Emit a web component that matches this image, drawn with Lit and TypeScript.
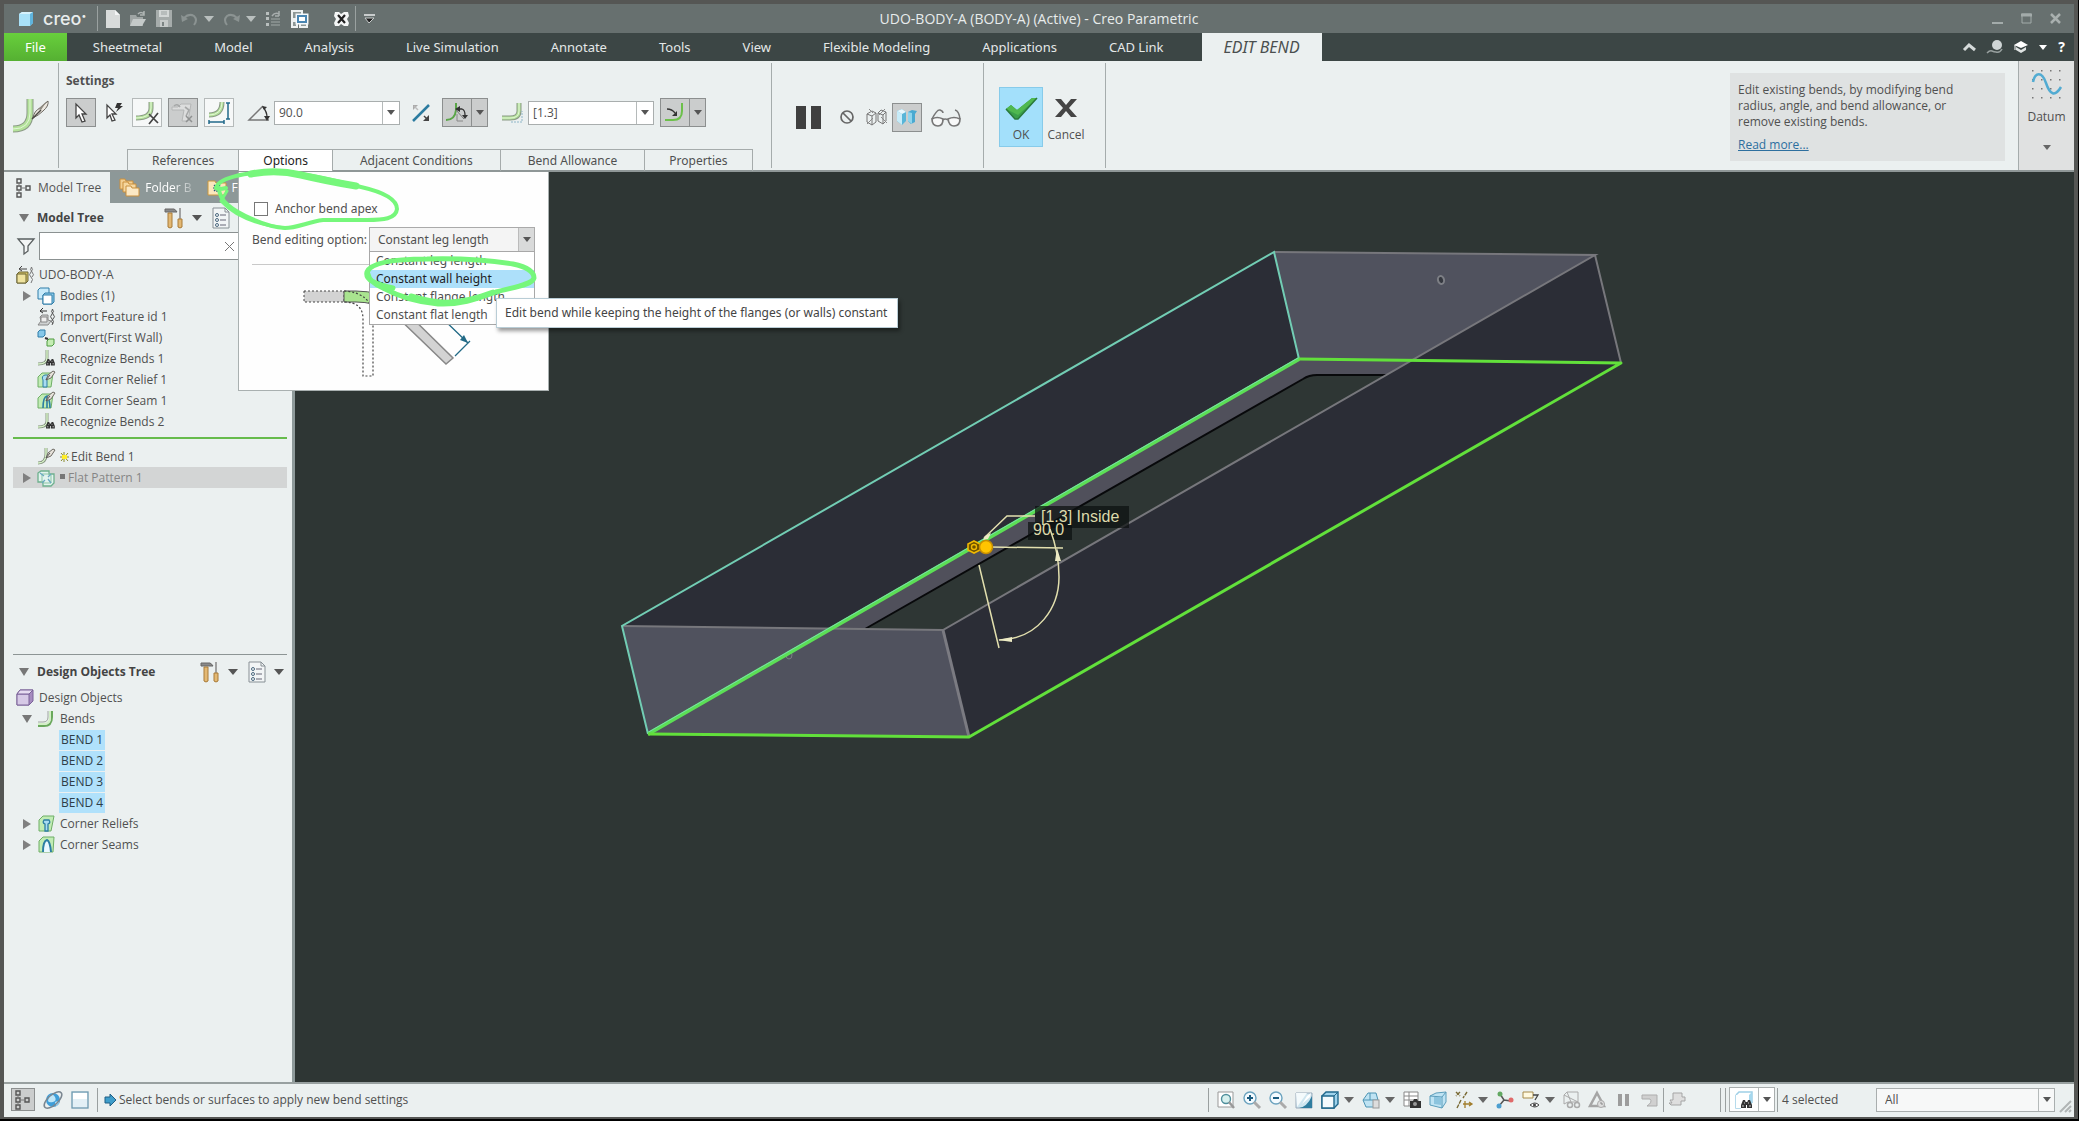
import { LitElement, html, css, svg, nothing } from "lit";
import { customElement } from "lit/decorators.js";
import { classMap } from "lit/directives/class-map.js";

const icon = (w: number, h: number, body: unknown) =>
  html`<svg class="ic" width=${w} height=${h} viewBox="0 0 ${w} ${h}" fill="none" aria-hidden="true">${body}</svg>`;

const caret = (fill = "#555") => icon(10, 6, svg`<path d="M0 0h10L5 6z" fill=${fill} />`);

const bend = (d: string, w = 4) => svg`
  <path d=${d} stroke="#8b9a86" stroke-width=${w + 2} />
  <path d=${d} stroke="#b4e29b" stroke-width=${w} />
  <path d=${d} stroke="#e2f6d6" stroke-width="1" />`;

const binoc = (x: number, y: number) => svg`
  <g transform="translate(${x} ${y})" fill="#333">
    <path d="M2 0h2l1 3v5H0V5zM7 0h2l2 5v3H6V3z" /><rect x="4" y="2" width="3" height="3" />
    <path d="M1 6h2M8 6h2M3 3h1M7 3h1" stroke="#ccc" />
  </g>`;

const pen = (x: number, y: number) => svg`
  <g transform="translate(${x} ${y})">
    <path d="M0 9l2-5 5-4 2 1-4 6z" fill="#e8e4dc" stroke="#6d6a63" stroke-width="1" />
    <path d="M0 9l4-5" stroke="#555" />
  </g>`;

const I = {
  logo: icon(16, 16, svg`
    <path d="M1 3l3-2h11v11l-3 3H1z" fill="#8fd6f4" /><path d="M1 3l3-2h11l-3 2z" fill="#d6f1fc" />
    <path d="M12 3l3-2v11l-3 3z" fill="#5fb4dd" /><path d="M1 3h11v12H1z" fill="#a9e1f8" />`),
  newDoc: icon(14, 18, svg`<path d="M0 0h9l5 5v13H0z" fill="#d8dbda" /><path d="M9 0l5 5H9z" fill="#f4f5f5" />`),
  open: icon(18, 16, svg`
    <path d="M1 4h6l1 2h6v9H1z" fill="#9fa5a4" /><path d="M4 8h13l-4 7H1z" fill="#c4c9c8" />
    <path d="M9 3q3-3 6 0M15 0v4h-4" stroke="#aeb4b3" stroke-width="1.5" />`),
  save: icon(16, 17, svg`
    <path d="M0 0h16v17H0z" fill="#a6acab" /><path d="M3 0h10v7H3z" fill="#d3d7d6" />
    <path d="M4 10h8v7H4z" fill="#c6cac9" /><path d="M6 12h2v4H6z" fill="#7c8483" />
    <path d="M5 2h6M5 4h6" stroke="#9ba2a1" />`),
  undo: icon(17, 14, svg`<path d="M3 6q5-5 10-2 4 4 0 9" stroke="#8b9392" stroke-width="2" /><path d="M0 3l1 7 6-3z" fill="#8b9392" />`),
  redo: icon(17, 14, svg`<path d="M14 6Q9 1 4 4 0 8 4 13" stroke="#8b9392" stroke-width="2" /><path d="M17 3l-1 7-6-3z" fill="#8b9392" />`),
  regen: icon(17, 16, svg`
    <path d="M1 1h3v3H1zM1 6h3v3H1zM1 12h3v3H1z" fill="#b9bfbe" />
    <path d="M6 8h9M6 11h9M6 14h9" stroke="#a2a9a8" /><path d="M7 5q3-4 7-2M14 0v5M10 5h4" stroke="#a8aeae" stroke-width="1.5" />`),
  windows: icon(18, 18, svg`
    <path d="M1 1h10v8H1zM1 11h5v6H1zM9 12h7v5H9z" fill="#8d9796" stroke="#eef1f1" stroke-width="2" />
    <rect x="5" y="4" width="12" height="10" fill="#fff" stroke="#eef4f8" /><path d="M7 6h8v6H7z" fill="#fff" stroke="#4a86b2" stroke-width="2" />`),
  closeWin: icon(15, 14, svg`
    <path d="M1 0h4l2 2 3-2h4l1 4-2 3 2 4-1 3h-4l-3-2-2 2H1l-1-3 2-4-2-3z" fill="#f4f6f6" />
    <path d="M4 3l7 8M11 3l-7 8" stroke="#222" stroke-width="2.2" />`),
  customize: icon(11, 9, svg`<path d="M0 1h11" stroke="#e8ebeb" stroke-width="1.5" /><path d="M1 4h9L5 9z" fill="#222" stroke="#c8cccc" stroke-width="1" />`),
  min: icon(11, 12, svg`<path d="M0 10h11" stroke="#a3abaa" stroke-width="2" />`),
  max: icon(11, 12, svg`<path d="M1 1h9v9H1z" stroke="#a3abaa" /><path d="M0 2h11" stroke="#a3abaa" stroke-width="3" />`),
  x: icon(11, 12, svg`<path d="M1 1l9 9M10 1l-9 9" stroke="#a9b0af" stroke-width="2.5" />`),
  up: icon(13, 8, svg`<path d="M1 7l5-5 6 5" stroke="#d5dada" stroke-width="3" />`),
  search: icon(16, 14, svg`<circle cx="10" cy="5" r="5" fill="#cfd5d5" /><path d="M0 13q3-3 5-2t4 1q4 1 6-3" stroke="#98a09f" stroke-width="1.5" />`),
  cap: icon(14, 12, svg`<path d="M0 4l7-4 7 4-7 3z" fill="#fff" /><path d="M2 6l5 3 5-3v3l-5 3-5-3z" fill="#dfe3e3" /><path d="M1 4v5" stroke="#fff" />`),
  editBend: icon(36, 36, svg`
    ${bend("M17 1v14q0 16-17 16", 5)}
    <path d="M20 20q1-7 7-10l8-7q1 5-5 10-4 4-10 7z" fill="#ebe7df" stroke="#6b6760" /><path d="M19 21l9-9" stroke="#4d4a45" stroke-width="1.5" /><path d="M25 11l9-8-6 9z" fill="#8f8a80" />`),
  pick: icon(14, 20, svg`<path d="M2 1v14l3-3 3 7 3-1-3-7h4z" fill="#fff" stroke="#444" stroke-width="1.3" />`),
  pickFast: icon(18, 19, svg`<path d="M2 2v13l3-3 2 6 3-1-3-6h4z" fill="#fff" stroke="#444" stroke-width="1.3" /><path d="M12 0h5l-2 3h3l-7 6 2-4h-3z" fill="#333" />`),
  bendX: icon(26, 24, svg`${bend("M17 1v6q0 10-15 10", 3)}<path d="M15 13l9 9M24 12l-9 11" stroke="#454545" stroke-width="1.7" />`),
  bendOff: icon(26, 24, svg`
    <path d="M2 6h6l3-3h10l-3 17h-6l2-11H2z" fill="#dcdddd" stroke="#b4b6b6" /><path d="M4 5q3-3 6 1M15 6l4 3-3 6" stroke="#a6a8a8" stroke-width="1.6" />
    <path d="M16 15l6 6M22 15l-6 6" stroke="#8f9191" stroke-width="1.5" />`),
  bendDim: icon(26, 24, svg`${bend("M16 1q0 13-13 13", 3)}<path d="M22 2v16M20 2h4M20 18h4M3 21h15M3 19v4M18 19v4" stroke="#226a8a" stroke-width="1.5" />`),
  angle: icon(22, 20, svg`<path d="M15 3L1 17h20" stroke="#777" stroke-width="1.5" /><path d="M15 4q4 5 4 10" stroke="#333" stroke-width="1.3" /><path d="M14 3l5 1-3 3zM16 13h6l-3 5z" fill="#333" />`),
  flip: icon(18, 18, svg`<path d="M1 17L17 1" stroke="#2b7ba0" stroke-width="2.5" /><path d="M1 1h5L1 6z" fill="#aaa" /><path d="M2 2l4 4" stroke="#bbb" stroke-width="1.5" /><path d="M17 17h-6l6-6z" fill="#444" /><path d="M12 12l4 4" stroke="#444" stroke-width="1.5" />`),
  radSide: icon(22, 20, svg`
    <path d="M10 0v7q-1 10-10 10" stroke="#5aa548" stroke-width="2" /><path d="M10 7l8 9" stroke="#777" />
    <path d="M13 6h3q3 1 3 6" stroke="#333" stroke-width="1.3" /><path d="M14 3v6l-5-3zM16 12h6l-3 4z" fill="#333" /><path d="M11 11v7h6" stroke="#888" />`),
  radius: icon(22, 20, svg`${bend("M17 0v8q0 7-9 7H0", 3)}<path d="M9 19h11V8" stroke="#8fb6c8" stroke-dasharray="2 1" />`),
  radIn: icon(20, 20, svg`<path d="M17 0v8q0 9-9 9H0" stroke="#6cc04a" stroke-width="2" /><path d="M2 6q5 0 8 4" stroke="#333" stroke-width="1.3" /><path d="M12 8v5H7z" fill="#333" />`),
  pause: icon(26, 23, svg`<path d="M0 0h10v23H0zM15 0h10v23H15z" fill="#3f3f3f" />`),
  none: icon(14, 14, svg`<circle cx="7" cy="7" r="6" stroke="#666" stroke-width="1.7" /><path d="M3 3l8 8" stroke="#666" stroke-width="1.7" />`),
  wire: icon(22, 18, svg`
    <path d="M1 6l5-3 4 2v9l-4 3-5-3zM1 6l5 2 4-3M6 8v9M12 5l3-3 5 2-3 3v9l3-3V4M12 5l5 2M12 5v8l5 3" stroke="#777" />
    <path d="M3 1l4 4M19 1l-6 6M1 16l6-6M21 15l-6-6" stroke="#8a8a8a" />`),
  verify: icon(22, 18, svg`
    <path d="M1 3l5-2 4 3v9l-4 4-5-4z" fill="#58b5d8" /><path d="M1 3l5 3v11l-5-4z" fill="#c7ecf9" /><path d="M1 3l5-2 4 3-4 2z" fill="#e7f7fd" />
    <path d="M12 4l4-2 5 1-2 3v8l-4 2-3-3z" fill="#49a9d1" /><path d="M12 4l4 1v11l-4-3z" fill="#8fd4ec" />`),
  glasses: icon(30, 20, svg`
    <path d="M1 12q5-3 11 0 0 7-5 7-6 0-6-7zM17 12q6-3 12 0 0 7-6 7-5 0-6-7z" fill="#f8f9f9" stroke="#777" stroke-width="1.7" />
    <path d="M12 13q2-2 5 0M1 12Q6 2 9 3t3 3M29 12q-1-8-5-9" stroke="#777" stroke-width="1.5" />`),
  ok: icon(32, 24, svg`<path d="M1 13l5-4 6 5L27 2h5L13 23h-3z" fill="#3aa04a" /><path d="M1 13l5-4 6 5L27 2h5L13 19z" fill="#4fb84f" /><path d="M1 13l9 10h3L32 2" stroke="#2a7a3b" stroke-width="1.5" />`),
  cancel: icon(22, 18, svg`<path d="M0 0h6l5 6 5-6h6l-8 9 8 9h-6l-5-6-5 6H0l8-9z" fill="#454545" />`),
  datum: icon(30, 28, svg`
    ${[1, 10, 19, 28].map((y) => [1, 10, 19, 28].map((x) => svg`<rect x=${x - 1} y=${y - 1} width="1.5" height="1.5" fill="#777" />`))}
    <path d="M1 12C3 2 10 1 14 13s9 14 15 4" stroke="#52abd2" stroke-width="2.5" />`),
  tree: icon(16, 20, svg`<path d="M1 1h4v4H1zM1 8h4v4H1zM1 15h4v4H1zM10 8h4v4h-4z" stroke="#555" stroke-width="1.4" /><path d="M3 5v3M3 12v3M6 10h3" stroke="#777" />`),
  folders: icon(21, 19, svg`
    <path d="M1 1h5l1 2h7v8H1z" fill="#f3cf92" stroke="#c98f3c" /><path d="M4 4h5l1 2h7v8H4z" fill="#f6d79f" stroke="#c98f3c" />
    <path d="M7 8h5l1 2h7v8H7z" fill="#fbe8c4" stroke="#c98f3c" />`),
  favs: icon(18, 17, svg`<path d="M0 2h7l1 2h10v12H0z" fill="#fbe6bd" stroke="#c9973f" /><path d="M9 5v8M5 9h8M6 6l6 6M12 6l-6 6" stroke="#1f4f7a" stroke-width="1.2" />`),
  hammer: icon(20, 22, svg`
    <path d="M1 2h9q2 1 3 3H1z" fill="#8a8a8a" stroke="#666" /><path d="M4 6h4v14q-2 2-4 0z" fill="#e3b873" stroke="#a87a38" />
    <path d="M16 1v11" stroke="#888" stroke-width="1.5" /><path d="M14 12h4v8q-2 2-4 0z" fill="#e3b873" stroke="#a87a38" />`),
  list: icon(18, 22, svg`
    <path d="M1 1h12l4 4v16H1z" fill="#f2f5f6" stroke="#889095" /><path d="M13 1v4h4" stroke="#889095" />
    <circle cx="5" cy="8" r="1.5" stroke="#4c6a80" /><circle cx="5" cy="13" r="1.5" stroke="#4c6a80" /><circle cx="5" cy="18" r="1.5" stroke="#4c6a80" />
    <path d="M8 8h6M8 13h6M8 18h6" stroke="#667" />`),
  funnel: icon(18, 18, svg`<path d="M1 2h16l-6 7v5l-4 3V9z" fill="#f3f5f5" stroke="#5a5f60" stroke-width="1.3" />`),
  part: icon(18, 18, svg`
    <path d="M1 8l2-2h9v9l-2 2H1z" fill="#d6c468" stroke="#6b6434" /><path d="M1 8h9v9H1z" fill="#efe39f" stroke="#6b6434" />
    <path d="M4 3h7M3 3l3-3M3 3l3 2" stroke="#444" /><path d="M15 1q3 2 0 5t0 5 0 6M16 1q-3 2 0 5t0 5" stroke="#777" />`),
  bodies: icon(18, 18, svg`<path d="M1 3l2-2h9v9l-2 2H1z" fill="#c7eafa" stroke="#2f7da8" /><path d="M6 8l2-2h9v9l-2 2H6z" fill="#8fcdea" stroke="#2f7da8" /><path d="M6 8h9v9H6z" fill="#fff" stroke="#2f7da8" />`),
  importF: icon(18, 18, svg`
    <path d="M3 9l2-2h6v5l3 1-3 4H1l3-4z" fill="#cfd2d2" stroke="#888" /><path d="M4 9h6v5H4z" fill="#eee" stroke="#888" />
    <path d="M3 3h7M3 3l3-3M3 3l3 2" stroke="#333" /><path d="M15 1q3 2 0 5t0 5 0 6M16 1q-3 2 0 5t0 5 0 5" stroke="#555" />`),
  convert: icon(18, 18, svg`
    <path d="M1 3l2-2h5v5L6 8H1z" fill="#86c8ea" stroke="#2f7da8" /><path d="M8 9l3 1" stroke="#333" stroke-width="2" />
    <path d="M10 12l2-2h5v5l-2 2h-5z" fill="#c5edb4" stroke="#4c9a3f" />`),
  recog: icon(18, 18, svg`${bend("M10 0v8q0 6-9 6", 1)}<g transform="translate(9 9) scale(.8)">${binoc(0, 0)}</g>`),
  relief: icon(18, 18, svg`<path d="M1 6l4-4h11l-2 14H1z" fill="#c1ecb4" stroke="#6fae66" /><path d="M6 16V9q-2-4 2-5h4q1 3-2 5v7z" fill="#a9dcf2" stroke="#2c7ea3" />${pen(9, 0)}`),
  seam: icon(18, 18, svg`<path d="M1 6l4-4h11l-2 14H1z" fill="#c1ecb4" stroke="#6fae66" /><path d="M6 16q0-11 4-12v12M10 4q3 4 3 12" stroke="#2c7ea3" stroke-width="1.6" />${pen(9, 0)}`),
  reliefs: icon(18, 18, svg`<path d="M2 5l4-4h11l-3 15H2z" fill="#c1ecb4" stroke="#6fae66" /><path d="M8 16V9q-3-1-1-4h5q2 3-1 4v7z" fill="#a9dcf2" stroke="#2c7ea3" stroke-width="1.3" />`),
  seams: icon(18, 18, svg`<path d="M2 5l4-4h11l-1 15H2z" fill="#c1ecb4" stroke="#6fae66" /><path d="M6 16q0-11 4-12 3 1 4 12" stroke="#2c7ea3" stroke-width="2" fill="#e9f8ff" />`),
  editSmall: icon(18, 18, svg`${bend("M9 0v6q0 9-8 9", 1)}${pen(9, 1)}`),
  flat: icon(18, 18, svg`
    <path d="M1 4l3-2h8v3h5v9l-3 3H6v-4H1z" fill="#e2f3ee" stroke="#6db08d" stroke-width="1.3" />
    <path d="M5 5h9v9H5z" stroke="#8cc5a5" /><path d="M3 4l4 3M14 14l-3-4M14 5l-3 3M5 14l3-3" stroke="#6aa8c0" stroke-width="1.3" />`),
  design: icon(18, 18, svg`<path d="M1 5l3-4h13v11l-4 4H1z" fill="#a58bbf" stroke="#7b6299" /><path d="M1 5h12v11H1z" fill="#d6c9e6" stroke="#7b6299" /><path d="M1 5l3-4h13l-4 4z" fill="#e6dcf1" stroke="#7b6299" />`),
  bends: icon(18, 18, svg`<path d="M15 1v6q0 9-8 9H1" stroke="#6aa85c" stroke-width="2" /><path d="M13 1v6q0 7-6 7H1" stroke="#d3efc6" stroke-width="2" /><path d="M11 1v6q0 5-5 5H1" stroke="#a0a6a1" />`),
  globe: icon(20, 20, svg`<circle cx="10" cy="10" r="7" fill="#3f9ed8" /><path d="M6 6q4-3 6 1t-2 5-5-1zM12 12q4-2 4 1l-3 3z" fill="#bfe6f8" /><ellipse cx="10" cy="10" rx="11" ry="5" transform="rotate(-42 10 10)" stroke="#7a8690" stroke-width="1.5" />`),
  square: icon(18, 18, svg`<rect x="1" y="1" width="16" height="16" fill="#e3f0f6" stroke="#6d99b0" stroke-width="1.3" /><path d="M2 2h14v6H2z" fill="#fff" />`),
  go: icon(13, 14, svg`<path d="M1 4h5V1l6 6-6 6v-3H1z" fill="#3f9ecb" stroke="#1f5f85" />`),
  zfit: icon(18, 18, svg`<path d="M1 1h15v15H1z" fill="#fff" stroke="#999" /><circle cx="9" cy="8" r="4.5" fill="#d6f0ee" stroke="#4f8f9c" stroke-width="1.4" /><path d="M12 11l5 6" stroke="#999" stroke-width="2.5" />`),
  zin: icon(18, 18, svg`<circle cx="7" cy="7" r="6" fill="#f4fbff" stroke="#6ba3bf" stroke-width="1.4" /><path d="M4 7h6M7 4v6" stroke="#1b5c80" stroke-width="2" /><path d="M11 11l6 6" stroke="#aaa" stroke-width="3" />`),
  zout: icon(18, 18, svg`<circle cx="7" cy="7" r="6" fill="#f4fbff" stroke="#6ba3bf" stroke-width="1.4" /><path d="M4 7h6" stroke="#1b5c80" stroke-width="2" /><path d="M11 11l6 6" stroke="#aaa" stroke-width="3" />`),
  repaint: icon(18, 18, svg`<path d="M1 2h16v15H1z" fill="#cfe6f0" stroke="#9ab" /><path d="M1 2h11L2 16z" fill="#f4fafc" /><path d="M17 5v12H4q8-1 13-12z" fill="#2f7d9f" /><path d="M16 2l-4 3-5 8 8-7z" fill="#fff" />`),
  cube: icon(18, 18, svg`<path d="M1 5l4-4h12v12l-4 4H1z" fill="#9fd3ec" stroke="#20688c" stroke-width="1.4" /><path d="M1 5h12v12H1z" fill="#f3fafd" stroke="#20688c" stroke-width="1.4" /><path d="M13 5l4-4" stroke="#20688c" />`),
  saved: icon(18, 18, svg`<path d="M1 9l5-7h8l2 7-4 7H4z" fill="#bfe3f3" stroke="#4c94b4" /><path d="M1 9h15M8 2v7" stroke="#4c94b4" /><rect x="11" y="9" width="6" height="8" fill="#ddd" stroke="#999" />`),
  camera: icon(18, 18, svg`<path d="M1 1h14v14H1zM1 5h14M1 9h14M6 1v14" fill="#fff" stroke="#888" /><path d="M7 10h3l1-2h3l1 2h3v7H7z" fill="#333" /><circle cx="12" cy="13" r="2" fill="#999" />`),
  persp: icon(18, 18, svg`<path d="M1 5l6-3 10-1v10l-4 6-12-3z" fill="#bfe3f3" stroke="#5b9dbb" /><path d="M1 5l12 1v11M13 6l4-5" stroke="#5b9dbb" /><path d="M5 6v7l7 1V6z" fill="#8cc4de" />`),
  axes: icon(18, 18, svg`<path d="M1 1l4 4M5 1L1 5M12 1l-4 6M6 9l-4 8" stroke="#7a6a35" stroke-width="1.4" stroke-dasharray="4 1" /><path d="M10 17v-7M8 13h9M14 11l3 2-3 2" stroke="#a17d2c" stroke-width="1.3" />`),
  spin: icon(18, 18, svg`<path d="M4 3l4 6 7 1M8 9l-5 6" stroke="#555" stroke-width="1.5" /><circle cx="4" cy="3" r="2.5" fill="#62a862" /><circle cx="15" cy="9" r="2.5" fill="#e06a6a" /><circle cx="3" cy="15" r="2.5" fill="#4c9fd0" />`),
  annot: icon(18, 18, svg`<path d="M1 1h10v6H1z" fill="#fff9e0" stroke="#a58a4a" /><path d="M11 4h5l-3 5" stroke="#444" stroke-width="1.3" /><path d="M8 14q5-4 9 0-4 4-9 0z" fill="#fff" stroke="#444" /><circle cx="12.5" cy="14" r="1.5" fill="#444" />`),
  dim1: icon(18, 18, svg`<path d="M1 4l3-3h11v10H5l-4 2zM1 4l14 7M4 1l4 10" stroke="#aaa" /><circle cx="7" cy="14" r="2.5" stroke="#aaa" stroke-width="1.5" /><circle cx="14" cy="14" r="2.5" stroke="#aaa" stroke-width="1.5" />`),
  dim2: icon(18, 18, svg`<path d="M8 2l7 13H1z" stroke="#a5a5a5" stroke-width="2.5" /><circle cx="12" cy="13" r="3.5" fill="#ddd" stroke="#aaa" /><path d="M12 11v2h2" stroke="#888" />`),
  dim3: icon(18, 18, svg`<path d="M3 3h4v12H3zM10 3h4v12h-4z" fill="#9c9c9c" />`),
  dim4: icon(18, 18, svg`<path d="M1 4h15v11H6q6-4 3-7H1z" fill="#d0d0d0" stroke="#adadad" />`),
  dim5: icon(18, 18, svg`<path d="M5 2h9v4h3v4h-4v4H3l-2-2h3l-2-3h3z" fill="#dedede" stroke="#a5a5a5" />`),
  find: icon(20, 20, svg`<path d="M2 5l3-3h13v11M2 5v13h5" stroke="#9fcfe6" stroke-width="1.5" /><path d="M2 5h13v13H2z" fill="#fff" /><path d="M15 5l3-3v11l-3 3z" fill="#a6d8ee" />${binoc(7, 10)}`),
};

const tri = (open: boolean) =>
  open ? icon(10, 8, svg`<path d="M0 0h10L5 8z" fill="#777" />`) : icon(8, 10, svg`<path d="M0 0v10l8-5z" fill="#808080" />`);

interface Row {
  text: string;
  icon?: unknown;
  level: number;
  toggle?: boolean;
  sel?: boolean;
  dim?: boolean;
  mark?: unknown;
}

const MODEL: Row[] = [
  { text: "UDO-BODY-A", icon: I.part, level: 0 },
  { text: "Bodies (1)", icon: I.bodies, level: 1, toggle: false },
  { text: "Import Feature id 1", icon: I.importF, level: 1 },
  { text: "Convert(First Wall)", icon: I.convert, level: 1 },
  { text: "Recognize Bends 1", icon: I.recog, level: 1 },
  { text: "Edit Corner Relief 1", icon: I.relief, level: 1 },
  { text: "Edit Corner Seam 1", icon: I.seam, level: 1 },
  { text: "Recognize Bends 2", icon: I.recog, level: 1 },
];

const PENDING: Row[] = [
  {
    text: "Edit Bend 1", icon: I.editSmall, level: 1,
    mark: icon(9, 10, svg`<path d="M4 0v10M0 5h9M1 1l7 8M8 1L1 9" stroke="#8b8b30" /><path d="M2 3h5v4H2z" fill="#ffee2a" />`),
  },
  { text: "Flat Pattern 1", icon: I.flat, level: 1, toggle: false, dim: true, mark: icon(6, 10, svg`<path d="M0 1h5v5H0z" fill="#777" />`) },
];

const DESIGN: Row[] = [
  { text: "Design Objects", icon: I.design, level: 0 },
  { text: "Bends", icon: I.bends, level: 1, toggle: true },
  { text: "BEND 1", level: 2, sel: true },
  { text: "BEND 2", level: 2, sel: true },
  { text: "BEND 3", level: 2, sel: true },
  { text: "BEND 4", level: 2, sel: true },
  { text: "Corner Reliefs", icon: I.reliefs, level: 1, toggle: false },
  { text: "Corner Seams", icon: I.seams, level: 1, toggle: false },
];

const TABS = ["Sheetmetal", "Model", "Analysis", "Live Simulation", "Annotate", "Tools", "View", "Flexible Modeling", "Applications", "CAD Link"];
const PANES = ["References", "Options", "Adjacent Conditions", "Bend Allowance", "Properties"];
const EDITING = ["Constant leg length", "Constant wall height", "Constant flange length", "Constant flat length"];

const base = css`
  :host, * { box-sizing: border-box; }
  button, input, select { font: inherit; color: inherit; margin: 0; padding: 0; border: 0; background: none; }
  button { display: inline-flex; align-items: center; justify-content: center; }
  ul { list-style: none; margin: 0; padding: 0; }
  .ic { display: block; flex: none; overflow: visible; }
`;

@customElement("creo-scene")
class CreoScene extends LitElement {
  static styles = css`
    :host { display: block; min-width: 0; overflow: hidden; background: #2e3634; }
    svg { display: block; width: 100%; height: 100%; }
    .note { font-family: "Liberation Sans", Arial, sans-serif; font-size: 16px; fill: #dcd9ab; }
  `;
  render() {
    return html`<svg viewBox="295 172 1779 910" preserveAspectRatio="xMidYMid slice" fill="none" role="img" aria-label="Sheetmetal part">
      <path d="M622 626L1274 252l25 107L648 734z" fill="#2b2d36" />
      <path d="M1274 252l321 3 26 108-322-4z" fill="#50525e" />
      <path d="M648 734l651-375 322 4-652 374z" fill="#50505b" />
      <path d="M865 629L1303 379q6-4 14-4h69L943 630z" fill="#2e3634" />
      <path d="M943 630l652-375 26 108-652 374z" fill="#2b2d36" />
      <path d="M622 626l321 4 26 107-321-3z" fill="#50525e" />
      <path d="M865 629L1303 379q6-4 14-4h69" stroke="#08090b" stroke-width="2" />
      <path d="M622 626l321 4L1595 255l-321-3M1595 255l26 108" stroke="#77777c" stroke-width="2" />
      <path d="M943 630l26 107" stroke="#7b7b82" stroke-width="3" />
      <ellipse cx="1441" cy="280" rx="3" ry="4" transform="rotate(-15 1441 280)" stroke="#7d7f85" stroke-width="2" fill="#35383f" />
      <ellipse cx="789" cy="655" rx="3" ry="4" stroke="#7d7f85" stroke-width="1" />
      <path d="M648 734l-26-108 652-374 25 107" stroke="#72cdb4" stroke-width="2" />
      <path d="M648 734l651-375" stroke="#5cdf55" stroke-width="4" />
      <path d="M647 733l651-375" stroke="#76dcae" stroke-width="1" />
      <path d="M1299 359l322 4-652 374-321-3" stroke="#62e03b" stroke-width="3" stroke-linejoin="round" />
      <rect x="1035" y="506" width="94" height="22" fill="#0c1010" fill-opacity=".72" />
      <rect x="1028" y="522" width="44" height="18" fill="#0c1010" fill-opacity=".72" />
      <g stroke="#e2dfae" stroke-width="1.5">
        <path d="M984 538l23-22h28M990 547l73 1M979 565l20 83" />
        <path d="M1050 529q9 24 9 48c0 30-20 62-60 63" />
      </g>
      <path d="M983 540l2-4 6-3-3 6zM1057 548l4 13h-6zM998 640l14-3v5z" fill="#eceac4" />
      <path d="M974 541l6 3v6l-6 3-6-3v-6z" fill="#6b5200" stroke="#f0b800" stroke-width="1.6" />
      <circle cx="974" cy="547" r="2.5" stroke="#f0b800" stroke-width="1.4" />
      <circle cx="986" cy="547" r="6.5" fill="#ffc400" stroke="#c88e00" stroke-width="1.5" />
      <text class="note" x="1041" y="522">[1.3] Inside</text>
      <text class="note" x="1033" y="535">90.0</text>
    </svg>`;
  }
}

@customElement("creo-panel")
class CreoPanel extends LitElement {
  static styles = [base, css`
    :host { display: flex; flex-direction: column; min-height: 0; background: #ebf0f0; border-right: 3px solid #8e9a9a; overflow: hidden; }
    .tabs { display: flex; height: 31px; flex: none; background: #8d9898; color: #fff; overflow: hidden; }
    .tab { gap: 6px; padding: 0 9px; flex: none; white-space: nowrap; }
    .tab.on { background: #ebf0f0; color: #555; padding-left: 12px; }
    .tab.mid { padding-right: 7px; gap: 5px; }
    .fade { -webkit-mask-image: linear-gradient(90deg, #000 60%, rgba(0, 0, 0, .3)); mask-image: linear-gradient(90deg, #000 60%, rgba(0, 0, 0, .3)); }
    .head { display: flex; align-items: center; height: 29px; padding: 0 44px 0 15px; gap: 8px; font-weight: 700; color: #444; flex: none; }
    .head .name { flex: 1; margin: 0; font-size: 12px; white-space: nowrap; }
    .head .wide { margin-right: 2px; }
    .filter { display: flex; align-items: center; gap: 4px; padding: 0 4px 0 13px; flex: none; }
    .box { display: flex; flex: 1; height: 28px; align-items: center; background: #fff; border: 1px solid #8b9191; }
    .box input { flex: 1; min-width: 0; height: 26px; padding: 0 6px; outline: 0; }
    .box button { margin-right: 51px; width: 14px; height: 14px; }
    .tree { padding-top: 4px; flex: none; }
    .row { display: flex; align-items: center; height: 21px; margin: 0 5px 0 9px; padding-left: 3px; white-space: nowrap; }
    .row .tw { width: 18px; height: 18px; padding-right: 3px; margin-left: 3px; }
    .row .label { margin-left: 5px; display: flex; align-items: center; gap: 2px; }
    .row .sel { margin-left: 43px; padding: 0 2px; height: 20px; line-height: 20px; background: #b0e1fb; color: #2e3d47; }
    .row.dim { background: #d3d5d5; color: #858585; }
    .insert { height: 2px; margin: 5px 5px 7px 9px; background: #66bb4c; flex: none; }
    .grow { flex: 1; }
    .design { border-top: 1px solid #8d9595; margin: 0 5px 0 9px; }
    .design .head { padding: 0 3px 0 6px; height: 32px; margin-top: 1px; margin-bottom: -1px; }
    .lower { height: 428px; flex: none; }
  `];
  private row(r: Row) {
    return html`<li class=${classMap({ row: true, dim: !!r.dim })}>
      ${r.level === 1 ? html`<button class="tw" aria-label=${r.toggle === undefined ? nothing : "Toggle " + r.text} ?disabled=${r.toggle === undefined}>${r.toggle === undefined ? nothing : tri(r.toggle)}</button>` : nothing}
      ${r.icon ?? nothing}
      <span class=${r.sel ? "sel" : "label"}>${r.mark ?? nothing}${r.text}</span>
    </li>`;
  }
  private tools() {
    return html`<button aria-label="Settings">${I.hammer}</button><button class="wide" aria-label="Settings menu">${caret()}</button>
      <button aria-label="Show">${I.list}</button><button aria-label="Show menu">${caret()}</button>`;
  }
  render() {
    return html`
      <div class="tabs">
        <button class="tab on">${I.tree}Model Tree</button>
        <button class="tab mid">${I.folders}<span class="fade">Folder B</span></button>
        <button class="tab">${I.favs}Favorites</button>
      </div>
      <div class="head">${tri(true)}<h2 class="name">Model Tree</h2>${this.tools()}</div>
      <div class="filter">${I.funnel}
        <div class="box"><input aria-label="Filter" /><button aria-label="Clear">${icon(9, 9, svg`<path d="M0 0l9 9M9 0L0 9" stroke="#777" />`)}</button></div>
      </div>
      <ul class="tree">${MODEL.map((r) => this.row(r))}</ul>
      <div class="insert"></div>
      <ul>${PENDING.map((r) => this.row(r))}</ul>
      <div class="grow"></div>
      <div class="lower">
        <div class="design"><div class="head">${tri(true)}<h2 class="name">Design Objects Tree</h2>${this.tools()}</div></div>
        <ul>${DESIGN.map((r) => this.row(r))}</ul>
      </div>`;
  }
}

@customElement("creo-options")
class CreoOptions extends LitElement {
  static styles = [base, css`
    :host { display: flex; flex-direction: column; width: 311px; height: 219px; background: #fefefe; border: 1px solid #a9b0b0; border-top: 0; padding: 28px 13px 0; font-family: "Noto Sans", "Open Sans", sans-serif; }
    .check { display: flex; align-items: center; gap: 7px; height: 18px; margin-left: 2px; }
    .check input { appearance: none; width: 14px; height: 14px; border: 1px solid #777; background: #fff; }
    .field { display: flex; align-items: center; justify-content: space-between; margin-top: 9px; padding-bottom: 12px; white-space: nowrap; }
    .pick { position: relative; width: 166px; height: 25px; display: flex; flex: none; }
    .pick select { appearance: none; width: 100%; border: 1px solid #aaa; background: #f4f4f4; padding: 0 8px; }
    .arrow { position: absolute; right: 1px; top: 1px; width: 16px; height: 23px; display: flex; align-items: center; justify-content: center; background: #d9dada; border-left: 1px solid #bbb; pointer-events: none; }
    .list { position: absolute; top: 24px; left: 0; width: 166px; background: #fff; border: 1px solid #a8a8a8; z-index: 1; }
    .opt { height: 18px; line-height: 18px; padding: 0 6px; white-space: nowrap; }
    .opt.on { background: #ade0fa; color: #222; }
    .rule { height: 1px; background: #c9c9c9; }
    .pic { display: block; width: 100%; height: 118px; }
    .loops { position: absolute; left: 0; top: 0; width: 311px; height: 219px; overflow: visible; pointer-events: none; z-index: 3; }
    .tip { position: absolute; left: 257px; top: 126px; height: 30px; line-height: 28px; padding: 0 10px 0 8px; white-space: nowrap; background: #fff; border: 1px solid #b9cdd6; box-shadow: 2px 3px 4px rgba(0, 0, 0, .4); color: #444; z-index: 2; }
  `];
  render() {
    return html`
      <label class="check"><input type="checkbox" />Anchor bend apex</label>
      <div class="field">
        <label for="edit-opt">Bend editing option:</label>
        <div class="pick">
          <select id="edit-opt">${EDITING.map((o) => html`<option>${o}</option>`)}</select>
          <span class="arrow">${icon(8, 5, svg`<path d="M0 0h8L4 5z" fill="#555" />`)}</span>
          <ul class="list" role="listbox">${EDITING.map((o, i) => html`<li role="option" class=${classMap({ opt: true, on: i === 1 })}>${o}</li>`)}</ul>
        </div>
      </div>
      <div class="rule"></div>
      <svg class="pic" viewBox="252 265 283 118" fill="none" aria-hidden="true">
        <path d="M304 291h40v11h-40z" fill="#d3d3d3" stroke="#444" stroke-dasharray="2 2" />
        <path d="M344 291h12q24 0 42 13l-7 7q-17-9-35-9h-12z" fill="#a9e48f" stroke="#555" />
        <path d="M398 304l55 54-7 6-55-53z" fill="#d3d3d3" stroke="#888" stroke-width="1.5" />
        <path d="M344 291q29 2 29 27v58h-10v-57q0-17-19-17" stroke="#444" stroke-dasharray="2 2" stroke-width="1.2" />
        <path d="M440 316l28 27M470 341l-15 15" stroke="#226a86" stroke-width="1.3" /><path d="M468 343l-8-3 4-5z" fill="#226a86" />
      </svg>
      <div class="tip" role="tooltip">Edit bend while keeping the height of the flanges (or walls) constant</div>
      <svg class="loops" viewBox="238 172 311 219" fill="none" stroke="#76f77b" stroke-linecap="round" stroke-linejoin="round" aria-hidden="true">
        <path d="M225 188q-8 2-10 0c2-9 25-16 60-16 35 1 62 10 85 15 22 5 36 12 36 22-1 10-14 11-30 11h-44c-15 2-26 8-38 8-20-1-48-15-57-23-6-5-9-12-9-17" stroke-width="4" />
        <path d="M250 174q25-5 50 1t55 11" stroke-width="7" />
        <path d="M226 191l-6 10q20 22 64 27" stroke-width="3" />
        <path d="M392 288c-18-4-28-8-26-16 4-10 30-13 60-13 40-1 68 2 86 5 14 3 21 8 21 14-2 7-20 9-38 14-22 8-36 13-58 12-22-2-42-9-55-16q-14-6-15-14" stroke-width="5" />
        <path d="M410 296q22 7 40 6t42-10" stroke-width="5" />
      </svg>`;
  }
}

@customElement("app-root")
class AppRoot extends LitElement {
  static styles = [base, css`
    :host { display: grid; grid-template-rows: 29px 28px 111px 1fr 35px; height: 100vh; min-height: 900px; padding: 4px 5px 4px 4px; background: #555654; font: 12px/16px "Open Sans", "Noto Sans", sans-serif; color: #505050; box-shadow: inset -1px -2px #000; overflow: hidden; }
    .title { display: flex; align-items: center; background: #67706f; color: #e8ecec; position: relative; padding-left: 14px; }
    .brand { font: 500 18px/20px Inter, sans-serif; margin-left: 9px; width: 54px; display: flex; }
    .brand small { font-size: 9px; line-height: 14px; }
    .bar { width: 1px; height: 25px; background: #9aa1a0; }
    .quick { display: flex; align-items: center; gap: 9px; margin: 0 6px 0 8px; }
    .quick .sm { margin: 0 0 0 -3px; }
    .quick .far { margin-left: 16px; }
    .doc { position: absolute; left: 0; right: 0; text-align: center; margin: 0; font-size: 14px; font-weight: 400; pointer-events: none; }
    .win { display: flex; gap: 18px; margin: 0 13px 0 auto; }
    .menu { display: flex; background: #3c4645; color: #e4e8e8; font-family: "Noto Sans", "Open Sans", sans-serif; font-size: 13px; }
    .menu button { padding: 0 26px; white-space: nowrap; }
    .menu .file { padding: 0 21px; background: linear-gradient(#68cf3c, #55b032); color: #fff; }
    .menu .ctx { margin-left: 12px; padding: 0 22px; background: #ebf0f0; color: #4a4f4f; font-style: italic; font-size: 16px; }
    .aux { display: flex; align-items: center; gap: 11px; margin: 0 9px 0 auto; }
    .menu .aux button { padding: 0; }
    .help { font-weight: 700; font-size: 14px; color: #fff; }
    .ribbon { display: flex; background: #ebf0f0; border-bottom: 2px solid #8f9797; }
    .sec { border-right: 1px solid #a5acac; margin: 2px 0; display: flex; }
    .feat { width: 55px; align-items: center; justify-content: center; }
    .set { flex-direction: column; padding: 0 0 0 7px; width: 713px; }
    .set h2 { margin: 10px 0 9px; font-size: 12px; line-height: 16px; height: 16px; }
    .line { display: flex; align-items: center; gap: 6px; height: 29px; }
    .b { width: 30px; height: 29px; flex: none; }
    .n { width: 24px; }
    .out { background: #f6f8f8; border: 1px solid #b5baba; }
    .in { background: #cbcdcd; border: 1px solid #8c8f8f; }
    .fld { display: flex; align-items: center; gap: 4px; }
    .gap { margin-left: 8px; }
    .combo { display: flex; width: 126px; height: 24px; background: #fff; border: 1px solid #a9aeae; }
    .combo input { flex: 1; min-width: 0; padding: 0 4px; outline: 0; }
    .combo button { width: 17px; border-left: 1px solid #b5baba; }
    .split { display: flex; width: 46px; height: 29px; flex: none; }
    .split button:first-child { flex: 1; }
    .split button:last-child { width: 16px; border-left: 1px solid #8c8f8f; }
    .panes { display: flex; height: 22px; margin: 22px 0 -4px 61px; font-family: "Noto Sans", "Open Sans", sans-serif; }
    .panes button { padding: 0 24px; border: 1px solid #a5abab; border-bottom: 0; white-space: nowrap; border-left-width: 0; }
    .panes button:first-child { border-left-width: 1px; }
    .panes .long { padding: 0 27px; }
    .panes .on { background: #fff; color: #222; }
    .ctl { align-items: center; padding: 3px 20px 0 24px; width: 212px; }
    .ctl .p { width: 36px; justify-content: flex-start; }
    .ctl .e { margin-left: 9px; }
    .fin { padding: 24px 15px; width: 122px; gap: 1px; }
    .big { flex-direction: column; width: 44px; height: 60px; gap: 7px; padding-top: 4px; }
    .big .ic { height: 24px; }
    .big.ok { background: #a3e0fb; border: 1px solid #87cbea; }
    .tips { margin: 12px 13px 9px auto; width: 275px; padding: 9px 36px 0 8px; background: #dfe2e2; }
    .tips p { margin: 0 0 7px; }
    .tips a { color: #2d6f9f; }
    .dat { flex-direction: column; justify-content: flex-start; width: 56px; background: #e0e1e1; border-left: 1px solid #a5acac; padding-top: 9px; gap: 11px; }
    .dat .c { margin-top: 9px; }
    .work { display: grid; grid-template-columns: 291px 1fr; min-height: 0; position: relative; }
    creo-options { position: absolute; left: 234px; top: 0; z-index: 2; }
    .status { display: flex; align-items: center; background: #ebf0f0; border-top: 2px solid #98a0a0; padding-bottom: 2px; }
    .l { display: flex; align-items: center; gap: 8px; padding-left: 7px; }
    .l .b { width: 24px; height: 23px; }
    .vs { width: 1px; height: 24px; background: #9aa0a0; }
    .msg { display: flex; align-items: center; gap: 2px; margin-left: 6px; }
    .r { display: flex; align-items: center; margin-left: auto; gap: 8px; }
    .r .duo { display: flex; align-items: center; gap: 5px; }
    .r .vm { margin: 0 -4px; }
    .tail { display: flex; align-items: center; margin-left: 26px; }
    .tail .s1 { margin-right: 4px; }
    .findbox { display: flex; width: 46px; height: 25px; background: #fff; border: 1px solid #a9aeae; margin: 0 2px 0 3px; }
    .findbox button:first-child { flex: 1; }
    .findbox button:last-child { width: 16px; border-left: 1px solid #b5baba; }
    .cnt { width: 98px; padding-left: 4px; }
    .all { position: relative; display: flex; width: 179px; height: 24px; }
    .all select { appearance: none; width: 100%; border: 1px solid #a9aeae; background: #f7f8f8; padding: 0 8px; }
    .all span { position: absolute; right: 1px; top: 1px; width: 16px; height: 22px; border-left: 1px solid #b5baba; display: flex; align-items: center; justify-content: center; pointer-events: none; }
    .grip { margin: 14px 2px 0 4px; }
  `];

  private combo(label: string, ic: unknown, value: string) {
    return html`<div class="fld">${ic}<div class="combo"><input aria-label=${label} .value=${value} /><button aria-label="${label} list">${icon(8, 5, svg`<path d="M0 0h8L4 5z" fill="#555" />`)}</button></div></div>`;
  }
  private split(label: string, ic: unknown) {
    return html`<div class="split in"><button aria-label=${label}>${ic}</button><button aria-label="${label} menu">${icon(8, 5, svg`<path d="M0 0h8L4 5z" fill="#555" />`)}</button></div>`;
  }
  private sb(label: string, ic: unknown, menu = false) {
    return menu
      ? html`<div class="duo"><button aria-label=${label}>${ic}</button><button aria-label="${label} menu">${caret("#666")}</button></div>`
      : html`<button aria-label=${label}>${ic}</button>`;
  }

  render() {
    return html`
      <header class="title">
        ${I.logo}<span class="brand">creo<small>•</small></span><span class="bar"></span>
        <div class="quick">
          <button aria-label="New">${I.newDoc}</button><button aria-label="Open">${I.open}</button><button aria-label="Save">${I.save}</button>
          <button aria-label="Undo">${I.undo}</button><button class="sm" aria-label="Undo list">${caret("#b9bfbe")}</button>
          <button aria-label="Redo">${I.redo}</button><button class="sm" aria-label="Redo list">${caret("#b9bfbe")}</button>
          <button aria-label="Regenerate">${I.regen}</button><button aria-label="Windows">${I.windows}</button>
          <button class="far" aria-label="Close window">${I.closeWin}</button>
        </div>
        <span class="bar"></span><div class="quick"><button aria-label="Customize">${I.customize}</button></div>
        <h1 class="doc">UDO-BODY-A (BODY-A) (Active) - Creo Parametric</h1>
        <div class="win"><button aria-label="Minimize">${I.min}</button><button aria-label="Maximize">${I.max}</button><button aria-label="Close">${I.x}</button></div>
      </header>
      <nav class="menu">
        <button class="file">File</button>
        ${TABS.map((t) => html`<button>${t}</button>`)}
        <button class="ctx">EDIT BEND</button>
        <div class="aux">
          <button aria-label="Collapse">${I.up}</button><button aria-label="Search">${I.search}</button><button aria-label="Learn">${I.cap}</button>
          <button aria-label="Learn menu">${icon(8, 5, svg`<path d="M0 0h8L4 5z" fill="#fff" />`)}</button><button class="help">?</button>
        </div>
      </nav>
      <div class="ribbon">
        <div class="sec feat">${I.editBend}</div>
        <section class="sec set">
          <h2>Settings</h2>
          <div class="line">
            <button class="b in" aria-label="Select">${I.pick}</button><button class="b n" aria-label="Quick select">${I.pickFast}</button>
            <button class="b out" aria-label="Remove bend">${I.bendX}</button><button class="b in" aria-label="Detach">${I.bendOff}</button><button class="b out" aria-label="Dimension">${I.bendDim}</button>
            <span class="gap">${this.combo("Angle", I.angle, "90.0")}</span>
            <button class="b" aria-label="Flip">${I.flip}</button>
            ${this.split("Angle type", I.radSide)}
            <span class="gap">${this.combo("Radius", I.radius, "[1.3]")}</span>
            ${this.split("Radius side", I.radIn)}
          </div>
          <div class="panes">${PANES.map((p) => html`<button class=${classMap({ on: p === "Options", long: p.includes(" ") })}>${p}</button>`)}</div>
        </section>
        <div class="sec ctl">
          <button class="b p" aria-label="Pause">${I.pause}</button><button class="b" aria-label="No preview">${I.none}</button>
          <button class="b" aria-label="Wireframe">${I.wire}</button><button class="b in" aria-label="Verify">${I.verify}</button><button class="b e" aria-label="Preview">${I.glasses}</button>
        </div>
        <div class="sec fin"><button class="big ok">${I.ok}OK</button><button class="big">${I.cancel}Cancel</button></div>
        <aside class="tips"><p>Edit existing bends, by modifying bend radius, angle, and bend allowance, or remove existing bends.</p><a href="#">Read more...</a></aside>
        <button class="dat">${I.datum}<span>Datum</span><span class="c">${icon(8, 5, svg`<path d="M0 0h8L4 5z" fill="#666" />`)}</span></button>
      </div>
      <main class="work"><creo-panel></creo-panel><creo-scene></creo-scene><creo-options></creo-options></main>
      <footer class="status">
        <div class="l">
          <button class="b in" aria-label="Model tree">${I.tree}</button><button aria-label="Browser">${I.globe}</button><button aria-label="Full screen">${I.square}</button><span class="vs"></span>
        </div>
        <div class="msg">${I.go}<span>Select bends or surfaces to apply new bend settings</span></div>
        <div class="r">
          <span class="vs"></span>
          ${this.sb("Refit", I.zfit)}${this.sb("Zoom in", I.zin)}${this.sb("Zoom out", I.zout)}${this.sb("Repaint", I.repaint)}
          ${this.sb("Display style", I.cube, true)}${this.sb("Saved orientations", I.saved, true)}${this.sb("View manager", I.camera)}${this.sb("Perspective", I.persp)}
          ${this.sb("Datum display", I.axes, true)}${this.sb("Spin center", I.spin)}${this.sb("Annotation display", I.annot, true)}
          ${this.sb("Simulate", I.dim1)}${this.sb("Warnings", I.dim2)}${this.sb("Pause simulation", I.dim3)}${this.sb("Results", I.dim4)}
          <span class="vs vm"></span>${this.sb("Layers", I.dim5)}
          <div class="tail">
            <span class="vs s1"></span><span class="vs"></span>
            <div class="findbox"><button aria-label="Find">${I.find}</button><button aria-label="Find menu">${icon(8, 5, svg`<path d="M0 0h8L4 5z" fill="#555" />`)}</button></div>
            <span class="vs"></span><span class="cnt">4 selected</span>
            <div class="all"><select aria-label="Selection filter"><option>All</option></select><span>${icon(8, 5, svg`<path d="M0 0h8L4 5z" fill="#555" />`)}</span></div>
            <span class="grip">${icon(13, 13, svg`<path d="M1 12L12 1M6 12l6-6M10 12l2-2" stroke="#b0b5b5" stroke-width="2" />`)}</span>
          </div>
        </div>
      </footer>`;
  }
}
